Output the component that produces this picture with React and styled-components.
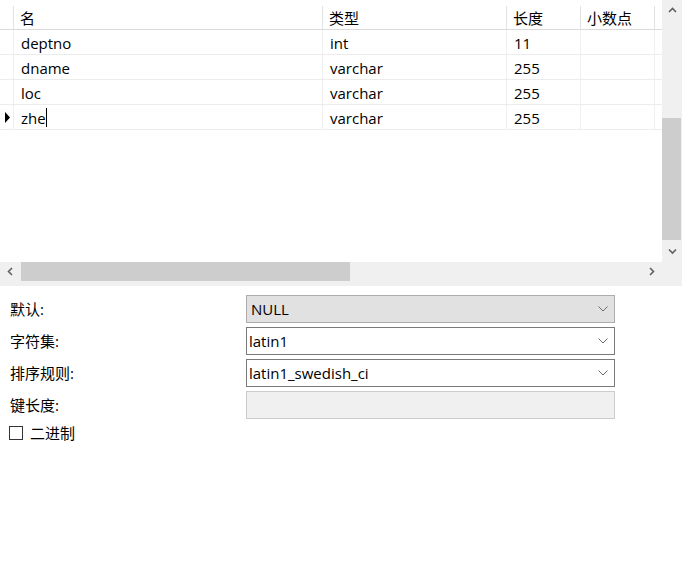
import React from 'react';
import styled, { createGlobalStyle } from 'styled-components';

const GlobalStyle = createGlobalStyle`
  html, body {
    margin: 0;
    padding: 0;
    background: #fff;
  }
  body {
    font-family: "Open Sans", "Noto Sans CJK SC", sans-serif;
    font-size: 15px;
    color: #000;
  }
`;

const Page = styled.div`
  width: 682px;
  height: 563px;
  background: #fff;
  overflow: hidden;
`;

const GridArea = styled.div`
  display: flex;
  height: 262px;
`;

const Table = styled.div`
  flex: 1;
  overflow: hidden;
`;

const cols = '13px 309px 184px 74px 74px 8px';

const HeaderRow = styled.div`
  display: grid;
  grid-template-columns: ${cols};
  height: 30px;
  border-bottom: 1px solid #dadada;
  box-sizing: border-box;
`;

const HeadCell = styled.div`
  position: relative;
  padding: 6px 7px 0;
  line-height: 24px;
  white-space: nowrap;
  overflow: hidden;
  &::before {
    content: '';
    position: absolute;
    left: 0;
    top: 6px;
    bottom: 0;
    width: 1px;
    background: ${p => (p.$first ? 'transparent' : '#e2e2e2')};
  }
`;

const Row = styled.div`
  display: grid;
  grid-template-columns: ${cols};
  height: 25px;
  border-bottom: 1px solid #ececec;
  box-sizing: border-box;
`;

const Cell = styled.div`
  padding: 1px 7px 0;
  white-space: nowrap;
  overflow: hidden;
  border-left: ${p => (p.$first ? 'none' : '1px solid #efefef')};
  display: flex;
  align-items: center;
`;

const Indicator = styled.div`
  display: flex;
  align-items: center;
  padding-left: 5px;
`;

const Caret = styled.span`
  display: inline-block;
  width: 1px;
  height: 19px;
  background: #000;
`;

const VScroll = styled.div`
  width: 20px;
  background: #f0f0f0;
  display: flex;
  flex-direction: column;
`;

const ArrowBox = styled.div`
  height: ${p => p.$h || 20}px;
  width: ${p => p.$w || 20}px;
  display: flex;
  align-items: center;
  justify-content: center;
  flex-shrink: 0;
`;

const VTrack = styled.div`
  flex: 1;
  display: flex;
  flex-direction: column;
  padding-top: 98px;
`;

const VThumb = styled.div`
  width: 19px;
  height: 122px;
  background: #cdcdcd;
`;

const HScroll = styled.div`
  height: 24px;
  background: #f0f0f0;
  display: flex;
`;

const HThumb = styled.div`
  width: 329px;
  height: 19px;
  background: #cdcdcd;
`;

const HRest = styled.div`
  flex: 1;
`;

const Form = styled.div`
  padding: 9px 0 0 0;
  display: flex;
  flex-direction: column;
  gap: 4px;
`;

const FormRow = styled.div`
  display: grid;
  grid-template-columns: 246px 369px;
  align-items: center;
  height: 28px;
`;

const Label = styled.div`
  padding-left: 10px;
  margin-top: -1px;
`;

const Field = styled.div`
  height: 28px;
  box-sizing: border-box;
  border: 1px solid ${p => (p.$variant === 'gray' ? '#adadad' : p.$variant === 'disabled' ? '#cccccc' : '#7a7a7a')};
  background: ${p => (p.$variant === 'gray' ? '#e1e1e1' : p.$variant === 'disabled' ? '#f0f0f0' : '#fff')};
  display: flex;
  align-items: center;
  justify-content: space-between;
  padding: 0 6px 0 ${p => (p.$variant === 'gray' ? 4 : 2)}px;
`;

const CheckRow = styled.label`
  display: flex;
  align-items: center;
  gap: 7px;
  padding-left: 9px;
  margin-top: -1px;
`;

const Box = styled.span`
  width: 14px;
  height: 14px;
  box-sizing: border-box;
  border: 1px solid #333;
  background: #fff;
`;

const Chevron = ({ dir = 'down', color = '#606060', size = 8 }) => {
  const paths = {
    up: 'M1 6 L4.5 2.5 L8 6',
    down: 'M1 2.5 L4.5 6 L8 2.5',
    left: 'M6 1 L2.5 4.5 L6 8',
    right: 'M3 1 L6.5 4.5 L3 8',
  };
  return (
    <svg width={size + 1} height={size + 1} viewBox="0 0 9 9">
      <path d={paths[dir]} fill="none" stroke={color} strokeWidth="1.6" />
    </svg>
  );
};

const Drop = () => (
  <svg width="10" height="6" viewBox="0 0 10 6">
    <path d="M0.5 0.5 L5 5 L9.5 0.5" fill="none" stroke="#6a6a6a" strokeWidth="1" />
  </svg>
);

const Triangle = () => (
  <svg width="5" height="11" viewBox="0 0 5 11">
    <path d="M0 0 L5 5.5 L0 11 Z" fill="#000" />
  </svg>
);

const rows = [
  { name: 'deptno', type: 'int', len: '11' },
  { name: 'dname', type: 'varchar', len: '255' },
  { name: 'loc', type: 'varchar', len: '255' },
  { name: 'zhe', type: 'varchar', len: '255', current: true },
];

export default function App() {
  return (
    <Page>
      <GlobalStyle />
      <GridArea>
        <Table>
          <HeaderRow>
            <HeadCell $first />
            <HeadCell>名</HeadCell>
            <HeadCell>类型</HeadCell>
            <HeadCell>长度</HeadCell>
            <HeadCell>小数点</HeadCell>
            <HeadCell />
          </HeaderRow>
          {rows.map(r => (
            <Row key={r.name}>
              <Indicator>{r.current && <Triangle />}</Indicator>
              <Cell>
                {r.name}
                {r.current && <Caret />}
              </Cell>
              <Cell>{r.type}</Cell>
              <Cell>{r.len}</Cell>
              <Cell />
              <Cell />
            </Row>
          ))}
        </Table>
        <VScroll>
          <ArrowBox $h={20}><Chevron dir="up" /></ArrowBox>
          <VTrack><VThumb /></VTrack>
          <ArrowBox $h={22}><Chevron dir="down" /></ArrowBox>
        </VScroll>
      </GridArea>
      <HScroll>
        <ArrowBox $w={21} $h={19}><Chevron dir="left" /></ArrowBox>
        <HThumb />
        <HRest />
        <ArrowBox $w={21} $h={19}><Chevron dir="right" /></ArrowBox>
        <ArrowBox $w={20} $h={19} />
      </HScroll>
      <Form>
        <FormRow>
          <Label>默认:</Label>
          <Field $variant="gray"><span>NULL</span><Drop /></Field>
        </FormRow>
        <FormRow>
          <Label>字符集:</Label>
          <Field><span>latin1</span><Drop /></Field>
        </FormRow>
        <FormRow>
          <Label>排序规则:</Label>
          <Field><span>latin1_swedish_ci</span><Drop /></Field>
        </FormRow>
        <FormRow>
          <Label>键长度:</Label>
          <Field $variant="disabled" />
        </FormRow>
        <CheckRow>
          <Box />
          <span>二进制</span>
        </CheckRow>
      </Form>
    </Page>
  );
}
